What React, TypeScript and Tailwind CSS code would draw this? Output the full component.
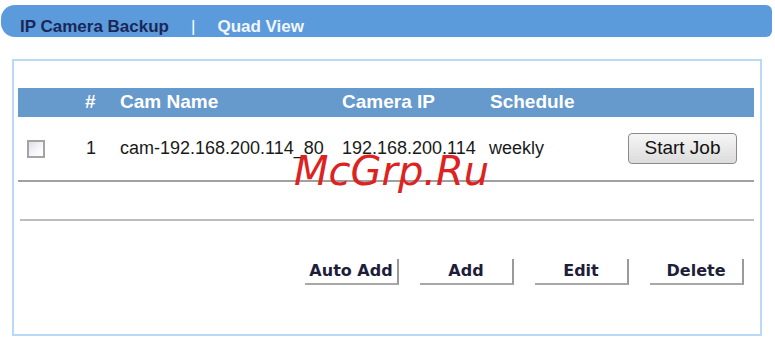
const cols = "grid grid-cols-[67px_35px_222px_148px_138px_1fr] items-center";

const ActionButton = ({ label }: { label: string }) => (
  <button className="h-[26px] w-[94px] bg-white border-r-2 border-b-2 border-r-[#9a9a9a] border-b-[#a8a8a8] text-[16px] font-bold text-[#1e1e3a] font-['DejaVu_Sans',sans-serif] leading-none">
    {label}
  </button>
);

const App = () => {
  return (
    <div className="relative w-[775px] h-[343px] bg-white font-['Liberation_Sans',Arial,sans-serif] overflow-hidden">
      {/* top tabs */}
      <div className="mt-[5px] ml-[1px] w-[771px] h-[32px] bg-[#5b9bdc] rounded-l-[14px] rounded-r-[6px] flex items-center pt-[11px] pl-[19px] text-[17px] font-bold">
        <span className="text-[#1a2858]">IP Camera Backup</span>
        <span className="ml-[22px] text-white font-normal">|</span>
        <span className="ml-[22px] text-[#f0f6fc]">Quad View</span>
      </div>

      {/* panel */}
      <div className="mt-[22px] ml-[12px] w-[750px] h-[277px] border-2 border-[#b9daf7] pt-[27px] pl-[4px] pr-[6px]">
        <div className={`${cols} h-[29px] bg-[#6699cc] text-white font-bold text-[19px]`}>
          <span />
          <span>#</span>
          <span>Cam Name</span>
          <span>Camera IP</span>
          <span>Schedule</span>
          <span />
        </div>
        <div className={`${cols} h-[65px] text-[18px] text-[#1a1a1a] border-b-2 border-[#a0a0a0]`}>
          <span className="pl-[9px]">
            <span className="block w-[18px] h-[18px] border-2 border-[#a4a4a4] bg-gradient-to-br from-[#dcdfe6] via-[#f4f5f8] to-white" />
          </span>
          <span className="pl-[1px]">1</span>
          <span>cam-192.168.200.114_80</span>
          <span>192.168.200.114</span>
          <span className="-ml-[1px]">weekly</span>
          <span>
            <button className="w-[109px] h-[31px] rounded-[4px] border border-[#8a8a8a] bg-gradient-to-b from-[#f6f6f6] to-[#dcdcdc] text-[19px] text-[#111]">
              Start Job
            </button>
          </span>
        </div>
        <div className="mt-[37px] ml-[2px] h-[2px] bg-[#bdbdbd]" />
        <div className="mt-[38px] flex justify-end gap-[21px] pr-[10px]">
          <ActionButton label="Auto Add" />
          <ActionButton label="Add" />
          <ActionButton label="Edit" />
          <ActionButton label="Delete" />
        </div>
      </div>

      {/* watermark */}
      <span className="absolute left-[294px] top-[151px] text-[40px] leading-[40px] italic text-[#dd2222] font-['DejaVu_Sans',sans-serif]">
        McGrp.Ru
      </span>
    </div>
  );
};

export default App;
